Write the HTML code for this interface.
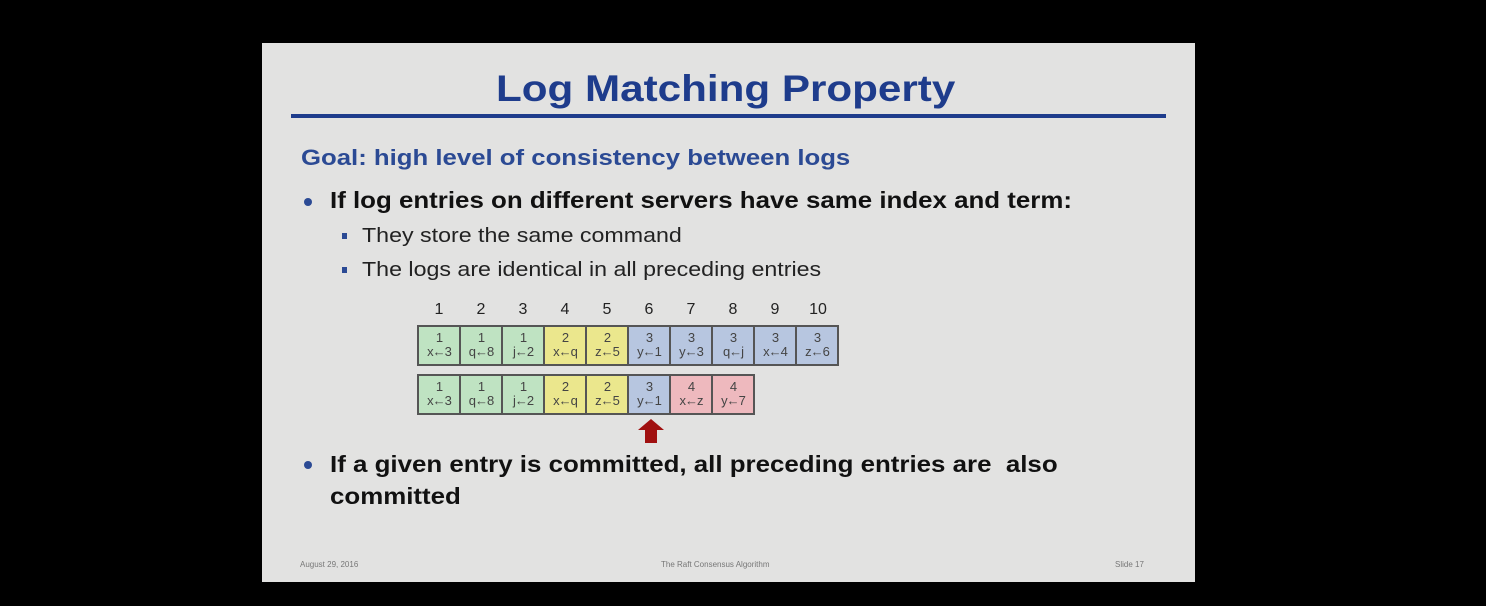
<!DOCTYPE html>
<html><head><style>
body{margin:0;width:1486px;height:606px;background:#000;position:relative;overflow:hidden;font-family:"Liberation Sans",Arial,sans-serif}
.slide{position:absolute;left:262px;top:43px;width:933px;height:539px;background:#e2e2e1}
.a{position:absolute;white-space:nowrap;transform-origin:0 0}
.title{left:234px;top:25px;font-size:37px;font-weight:bold;color:#1e3c8c;transform:scaleX(1.14)}
.rule{left:29px;top:71px;width:875px;height:4px;background:#1e3c8c}
.goal{left:39px;top:102px;font-size:22px;font-weight:bold;color:#2b4a94;transform:scaleX(1.17)}
.b{font-size:23px;font-weight:bold;color:#111;transform:scaleX(1.125)}
.dot{width:8px;height:8px;border-radius:50%;background:#2b4a94}
.s{font-size:20px;color:#222;transform:scaleX(1.16)}
.sq{width:5px;height:6px;background:#2b4a94}
.num{font-size:16px;color:#222;width:42px;text-align:center}
.row{position:absolute;display:flex;border:2px solid #555}
.c{width:42px;height:37px;border-right:2px solid #555;font-size:13px;line-height:14px;text-align:center;color:#444;padding-top:4px;box-sizing:border-box;letter-spacing:-1px}
.c:last-child{border-right:none;width:40px}
.g{background:#bfe3c2}.y{background:#ebe78d}.bl{background:#b7c6e0}.r{background:#eeb9be}
.foot{font-size:8px;color:#777;top:517px}
</style></head><body>
<div class="slide">
<div class="a title">Log Matching Property</div>
<div class="a rule"></div>
<div class="a goal">Goal: high level of consistency between logs</div>
<div class="a dot" style="left:42px;top:155px"></div>
<div class="a b" style="left:68px;top:144px">If log entries on different servers have same index and term:</div>
<div class="a sq" style="left:80px;top:190px"></div>
<div class="a s" style="left:100px;top:182px">They store the same command</div>
<div class="a sq" style="left:80px;top:224px"></div>
<div class="a s" style="left:100px;top:216px">The logs are identical in all preceding entries</div>
<div class="a num" style="left:156px;top:258px">1</div>
<div class="a num" style="left:198px;top:258px">2</div>
<div class="a num" style="left:240px;top:258px">3</div>
<div class="a num" style="left:282px;top:258px">4</div>
<div class="a num" style="left:324px;top:258px">5</div>
<div class="a num" style="left:366px;top:258px">6</div>
<div class="a num" style="left:408px;top:258px">7</div>
<div class="a num" style="left:450px;top:258px">8</div>
<div class="a num" style="left:492px;top:258px">9</div>
<div class="a num" style="left:535px;top:258px">10</div>
<div class="row" style="left:155px;top:282px">
<div class="c g">1<br>x←3</div><div class="c g">1<br>q←8</div><div class="c g">1<br>j←2</div><div class="c y">2<br>x←q</div><div class="c y">2<br>z←5</div><div class="c bl">3<br>y←1</div><div class="c bl">3<br>y←3</div><div class="c bl">3<br>q←j</div><div class="c bl">3<br>x←4</div><div class="c bl">3<br>z←6</div>
</div>
<div class="row" style="left:155px;top:331px">
<div class="c g">1<br>x←3</div><div class="c g">1<br>q←8</div><div class="c g">1<br>j←2</div><div class="c y">2<br>x←q</div><div class="c y">2<br>z←5</div><div class="c bl">3<br>y←1</div><div class="c r">4<br>x←z</div><div class="c r">4<br>y←7</div>
</div>
<svg class="a" style="left:375px;top:376px" width="28" height="24"><path d="M14 0 L27 11 L20 11 L20 24 L8 24 L8 11 L1 11Z" fill="#a01010"/></svg>
<div class="a dot" style="left:42px;top:418px"></div>
<div class="a b" style="left:68px;top:405px;line-height:32px">If a given entry is committed, all preceding entries are &nbsp;also<br>committed</div>
<div class="a foot" style="left:38px">August 29, 2016</div>
<div class="a foot" style="left:399px">The Raft Consensus Algorithm</div>
<div class="a foot" style="left:853px">Slide 17</div>
</div>
</body></html>
